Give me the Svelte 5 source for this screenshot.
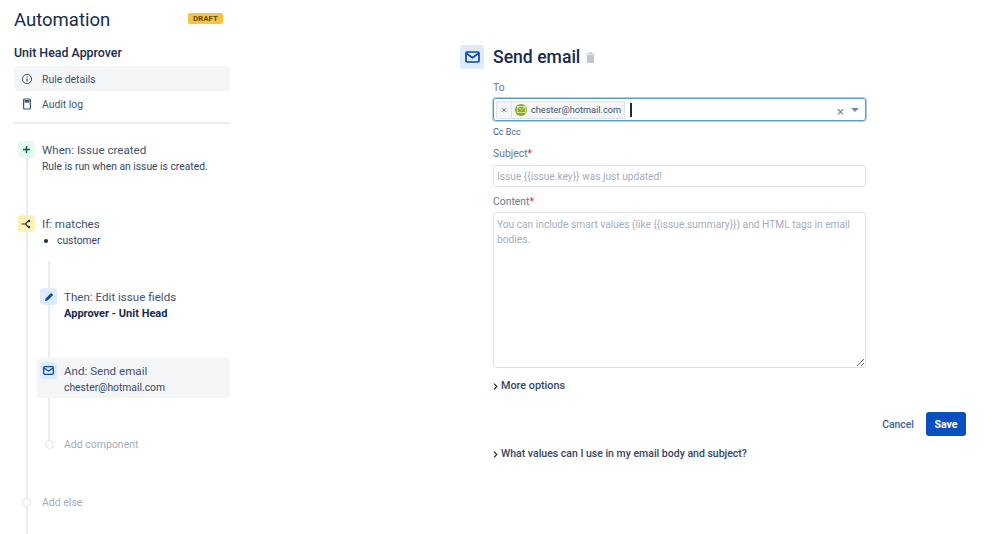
<script>
	const steps = [
		{ kind: 'when', title: 'When: Issue created', sub: 'Rule is run when an issue is created.' },
		{ kind: 'if', title: 'If: matches', bullet: 'customer' }
	];
</script>

<div class="page">
	<aside class="side">
		<header class="top">
			<h1>Automation</h1>
			<span class="draft">DRAFT</span>
		</header>
		<h2>Unit Head Approver</h2>
		<nav class="menu">
			<div class="item active">
				<svg width="12" height="12" viewBox="0 0 12 12" fill="none" stroke="#42526e" stroke-width="1">
					<circle cx="6" cy="6" r="4.6" />
					<path d="M6 5.4v3M6 3.4v1" stroke-width="1.2" />
				</svg>
				<span>Rule details</span>
			</div>
			<div class="item">
				<svg width="12" height="12" viewBox="0 0 12 12" fill="none" stroke="#42526e" stroke-width="1.2">
					<rect x="2.6" y="1" width="6.8" height="10" rx="1" />
					<rect x="3.6" y="2" width="4.8" height="2.6" fill="#42526e" stroke="none" />
				</svg>
				<span>Audit log</span>
			</div>
		</nav>
		<hr />

		<div class="flow">
			{#each steps as step}
				<div class="step {step.kind}">
					<span class="badge {step.kind}">
						{#if step.kind === 'when'}
							<svg width="9" height="9" viewBox="0 0 9 9"><path d="M4.5 1v7M1 4.5h7" stroke="#006644" stroke-width="1.5" /></svg>
						{:else}
							<svg width="11" height="10" viewBox="0 0 11 10" fill="none" stroke="#172b4d" stroke-width="1.2"><path d="M0.5 5h4L7 2.2M4.5 5L7 7.8" /><circle cx="8" cy="2" r="1.2" fill="#172b4d" stroke="none" /><circle cx="8" cy="8" r="1.2" fill="#172b4d" stroke="none" /></svg>
						{/if}
					</span>
					<div class="body">
						<div class="title">{step.title}</div>
						{#if step.sub}<div class="sub">{step.sub}</div>{/if}
						{#if step.bullet}<div class="sub bullet"><i></i>{step.bullet}</div>{/if}
					</div>
				</div>
			{/each}

			<div class="nested">
				<div class="step then">
					<span class="badge blue">
						<svg width="10" height="10" viewBox="0 0 10 10"><path d="M1 9l.6-2.6L6.6 1.4a.8.8 0 0 1 1.1 0l.9.9a.8.8 0 0 1 0 1.1L3.6 8.4z" fill="#0747a6" /></svg>
					</span>
					<div class="body">
						<div class="title">Then: Edit issue fields</div>
						<div class="sub strong">Approver - Unit Head</div>
					</div>
				</div>
				<div class="step and">
					<span class="badge blue">
						<svg width="11" height="9" viewBox="0 0 11 9" fill="none" stroke="#0747a6" stroke-width="1.3"><rect x="0.7" y="0.7" width="9.6" height="7.6" rx="1" /><path d="M1 2l4.5 3L10 2" /></svg>
					</span>
					<div class="body">
						<div class="title">And: Send email</div>
						<div class="sub">chester@hotmail.com</div>
					</div>
				</div>
				<div class="add inner">
					<span class="dot"></span>
					<span>Add component</span>
				</div>
			</div>
			<div class="add outer">
				<span class="dot"></span>
				<span>Add else</span>
			</div>
		</div>
	</aside>

	<main class="main">
		<div class="head">
			<span class="head-icon">
				<svg width="15" height="12" viewBox="0 0 15 12" fill="none" stroke="#0747a6" stroke-width="1.7"><rect x="1" y="1" width="13" height="10" rx="1.3" /><path d="M1.5 2.5l6 4.2 6-4.2" /></svg>
			</span>
			<h3>Send email</h3>
			<svg class="trash" width="9" height="11" viewBox="0 0 9 11"><path d="M0 1.5h9v1H0zM3 .3h3v1H3zM1 3h7v8H1z" fill="#c1c7d0" /></svg>
		</div>

		<div class="form">
			<div class="label first">To</div>
			<div class="select">
				<span class="chip">
					<span class="chip-x">×</span>
					<span class="chip-main">
						<span class="avatar">
							<svg width="9" height="7" viewBox="0 0 9 7" fill="none" stroke="#d9e6a8" stroke-width="0.9"><rect x="0.5" y="0.5" width="8" height="6" /><path d="M1 1l3.5 3L8 1" /></svg>
						</span>
						chester@hotmail.com
					</span>
				</span>
				<span class="cursor"></span>
				<span class="clear">×</span>
				<span class="caret"></span>
			</div>
			<div class="ccbcc">Cc Bcc</div>

			<div class="label">Subject<b>*</b></div>
			<input class="field" type="text" placeholder={'Issue {{issue.key}} was just updated!'} />

			<div class="label second">Content<b>*</b></div>
			<textarea class="field area" placeholder={'You can include smart values (like {{issue.summary}}) and HTML tags in email bodies.'}></textarea>

			<div class="more">
				<svg width="5" height="7" viewBox="0 0 5 7" fill="none" stroke="#172b4d" stroke-width="1.2"><path d="M1 .7l2.8 2.8L1 6.3" /></svg>
				<span>More options</span>
			</div>
		</div>

		<div class="actions">
			<span class="cancel">Cancel</span>
			<span class="save">Save</span>
		</div>

		<div class="more help">
			<svg width="5" height="7" viewBox="0 0 5 7" fill="none" stroke="#172b4d" stroke-width="1.2"><path d="M1 .7l2.8 2.8L1 6.3" /></svg>
			<span>What values can I use in my email body and subject?</span>
		</div>
	</main>
</div>

<style>
	:global(body) {
		margin: 0;
		background: #fff;
		font-family: Roboto, 'Open Sans', sans-serif;
		color: #172b4d;
	}

	.page {
		display: flex;
		height: 534px;
		overflow: hidden;
	}

	.side {
		width: 216px;
		margin-left: 14px;
		flex: none;
	}

	.top {
		display: flex;
		align-items: center;
		justify-content: space-between;
		height: 24px;
		margin-top: 7px;
		padding-right: 7px;
	}

	h1 {
		margin: 0;
		padding-top: 1px;
		font-size: 18.5px;
		font-weight: 400;
		line-height: 24px;
	}

	.draft {
		background: #f6c343;
		color: #5e4a12;
		font-size: 8px;
		font-weight: 700;
		line-height: 11px;
		padding: 0 5px;
		border-radius: 2px;
		margin-top: -2px;
	}

	h2 {
		margin: 13px 0 5px;
		font-size: 12.4px;
		font-weight: 500;
		line-height: 17px;
	}

	.item {
		display: flex;
		align-items: center;
		gap: 9px;
		height: 25px;
		padding-left: 7px;
		font-size: 10.4px;
		color: #42526e;
		border-radius: 3px;
	}

	.item span {
		padding-top: 2px;
	}

	.item.active {
		background: #f4f5f7;
	}

	hr {
		border: 0;
		border-top: 2px solid #ebecf0;
		margin: 6px 0 0;
	}

	.flow {
		position: relative;
		padding-top: 17px;
		height: 410px;
	}

	.flow::before {
		content: '';
		position: absolute;
		left: 12px;
		top: 30px;
		bottom: 0;
		width: 2px;
		background: #ebecf0;
	}

	.step {
		display: flex;
		gap: 7px;
		position: relative;
	}

	.step.when {
		margin-left: 4px;
		height: 74px;
	}

	.step.if {
		margin-left: 4px;
		height: 46px;
	}

	.badge {
		width: 17px;
		height: 17px;
		flex: none;
		border-radius: 3px;
		display: flex;
		align-items: center;
		justify-content: center;
	}

	.badge.when {
		background: #e3fcef;
	}

	.badge.if {
		background: #fff0b3;
	}

	.badge.blue {
		background: #deebff;
	}

	.title {
		font-size: 11.6px;
		line-height: 18px;
		color: #42526e;
	}

	.sub {
		font-size: 10.3px;
		line-height: 15px;
		color: #344563;
	}

	.sub.strong {
		font-weight: 700;
		color: #172b4d;
		font-size: 11px;
		margin-top: 0;
	}

	.bullet {
		display: flex;
		align-items: center;
		gap: 9px;
		padding-left: 2px;
	}

	.bullet i {
		width: 4px;
		height: 4px;
		border-radius: 50%;
		background: #172b4d;
	}

	.nested {
		position: relative;
		margin-left: 23px;
		padding-top: 27px;
	}

	.nested::before {
		content: '';
		position: absolute;
		left: 11px;
		top: 0;
		height: 182px;
		width: 2px;
		background: #ebecf0;
	}

	.step.then {
		margin-left: 3px;
		height: 70px;
	}

	.step.and {
		background: #f4f5f7;
		border-radius: 3px;
		padding: 4px 0 0 3px;
		height: 36px;
	}

	.add {
		display: flex;
		align-items: center;
		gap: 10px;
		font-size: 10.5px;
		color: #a5adba;
		position: relative;
	}

	.add.inner {
		margin-top: 40px;
		padding-left: 8px;
	}

	.add.outer {
		margin-top: 45px;
		padding-left: 8px;
		gap: 11px;
	}

	.dot {
		width: 7px;
		height: 7px;
		border: 1px solid #dfe1e6;
		border-radius: 50%;
		background: #fff;
		flex: none;
	}

	.main {
		margin-left: 230px;
		width: 406px;
		flex: none;
	}

	.head {
		display: flex;
		align-items: center;
		margin-top: 45px;
	}

	.head-icon {
		width: 24px;
		height: 24px;
		background: #deebff;
		border-radius: 3px;
		display: flex;
		align-items: center;
		justify-content: center;
	}

	h3 {
		margin: 0 0 0 9px;
		font-size: 17.6px;
		font-weight: 500;
		line-height: 24px;
	}

	.trash {
		margin-left: 6px;
	}

	.form,
	.help {
		margin-left: 33px;
	}

	.label {
		font-size: 10.4px;
		line-height: 14px;
		color: #6b778c;
		margin: 9px 0 4px;
	}

	.label.first {
		margin-top: 12px;
		margin-bottom: 3px;
	}

	.label.second {
		margin-top: 8px;
		margin-bottom: 3px;
	}

	.label b {
		color: #c9372c;
		font-weight: 400;
	}

	.select {
		position: relative;
		box-sizing: border-box;
		width: 373px;
		height: 23px;
		border: 1px solid #5b9fc9;
		box-shadow: 0 0 0 1px #a8cfe4;
		border-radius: 3px;
		display: flex;
		align-items: center;
		padding-left: 2px;
		color: #6b778c;
	}

	.chip {
		display: flex;
		height: 16px;
		align-items: center;
		background: #f4f5f7;
		border: 1px solid #dfe1e6;
		border-radius: 2px;
		font-size: 9.2px;
		color: #42526e;
	}

	.chip-x {
		width: 14px;
		text-align: center;
		border-right: 1px solid #dfe1e6;
		line-height: 16px;
		color: #6b778c;
	}

	.chip-main {
		display: flex;
		align-items: center;
		gap: 4px;
		padding: 0 3px;
	}

	.avatar {
		width: 12px;
		height: 12px;
		border-radius: 50%;
		background: #8ba92a;
		display: flex;
		align-items: center;
		justify-content: center;
	}

	.cursor {
		width: 2px;
		height: 14px;
		background: #172b4d;
		margin-left: 5px;
	}

	.clear {
		margin-left: auto;
		font-size: 13px;
		line-height: 13px;
		color: #7a869a;
		margin-top: 3px;
	}

	.caret {
		width: 0;
		height: 0;
		border: 4px solid transparent;
		border-top: 4px solid #7a869a;
		border-bottom: 0;
		margin: 0 6px 0 7px;
	}

	.ccbcc {
		font-size: 9px;
		line-height: 12px;
		color: #42608f;
		margin-top: 5px;
	}

	.field {
		display: block;
		box-sizing: border-box;
		width: 373px;
		height: 22px;
		border: 1px solid #dfe1e6;
		border-radius: 3px;
		padding: 0 3px;
		margin: 0;
		font-family: inherit;
		font-size: 10.2px;
		outline: none;
		background: #fff;
	}

	.field::placeholder {
		color: #a5adba;
		opacity: 1;
	}

	.area {
		height: 156px;
		padding: 4px 3px;
		line-height: 15px;
	}

	.more {
		display: flex;
		align-items: center;
		gap: 3px;
		font-size: 10.8px;
		font-weight: 500;
		color: #344563;
		margin-top: 11px;
		line-height: 14px;
	}

	.actions {
		display: flex;
		justify-content: flex-end;
		align-items: center;
		gap: 12px;
		margin-top: 19px;
		width: 506px;
	}

	.cancel {
		font-size: 10.4px;
		font-weight: 500;
		color: #42608f;
	}

	.save {
		width: 40px;
		height: 24px;
		background: #0a4fc0;
		border-radius: 3px;
		color: #fff;
		font-size: 10.6px;
		font-weight: 700;
		display: flex;
		align-items: center;
		justify-content: center;
	}

	.more.help {
		margin-top: 11px;
		font-size: 10.5px;
	}
</style>
